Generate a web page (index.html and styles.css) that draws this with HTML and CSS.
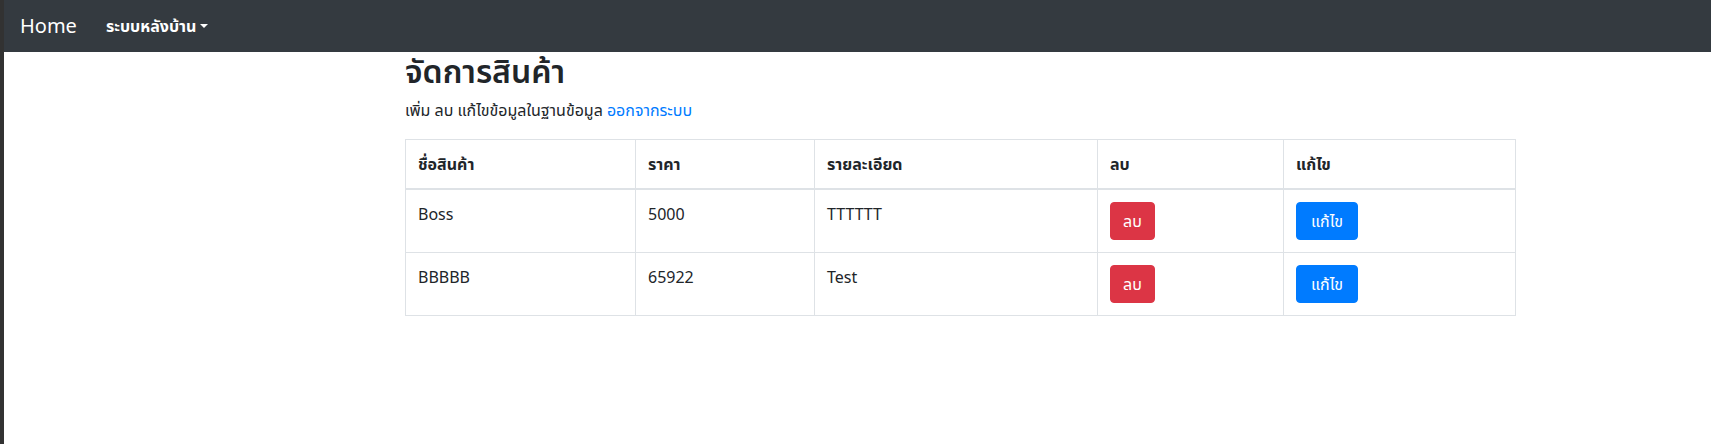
FILE: index.html
```html
<!DOCTYPE html>
<html lang="th">
<head>
<meta charset="utf-8">
<title>จัดการสินค้า</title>
<link rel="stylesheet" href="styles.css">
</head>
<body>
<nav class="navbar">
  <a class="brand" href="#">Home</a>
  <a class="nav-dropdown" href="#">ระบบหลังบ้าน<span class="caret"></span></a>
</nav>
<main class="container">
  <h2 class="title">จัดการสินค้า</h2>
  <p class="lead-text">เพิ่ม ลบ แก้ไขข้อมูลในฐานข้อมูล <a class="link" href="#">ออกจากระบบ</a></p>
  <table class="table">
    <colgroup>
      <col class="c1"><col class="c2"><col class="c3"><col class="c4"><col class="c5">
    </colgroup>
    <thead>
      <tr><th>ชื่อสินค้า</th><th>ราคา</th><th>รายละเอียด</th><th>ลบ</th><th>แก้ไข</th></tr>
    </thead>
    <tbody>
      <tr>
        <td>Boss</td><td>5000</td><td>TTTTTT</td>
        <td><a class="btn btn-danger" href="#">ลบ</a></td>
        <td><a class="btn btn-primary" href="#">แก้ไข</a></td>
      </tr>
      <tr>
        <td>BBBBB</td><td>65922</td><td>Test</td>
        <td><a class="btn btn-danger" href="#">ลบ</a></td>
        <td><a class="btn btn-primary" href="#">แก้ไข</a></td>
      </tr>
    </tbody>
  </table>
</main>
</body>
</html>
```
FILE: styles.css
```css
html, body {
  margin: 0;
  padding: 0;
}
body {
  min-height: 444px;
  box-sizing: border-box;
  border-left: 4px solid #323232;
  background: #fff;
  color: #212529;
  font-family: "Segoe UI", "Noto Sans", "Noto Sans Thai", "Leelawadee UI", sans-serif;
  font-size: 16px;
  line-height: 1.5;
}
.navbar {
  height: 52px;
  box-sizing: border-box;
  background: #343a40;
  display: flex;
  align-items: center;
  padding: 0 16px;
}
.brand {
  color: #fff;
  font-size: 20px;
  line-height: 30px;
  text-decoration: none;
  margin-right: 29px;
}
.nav-dropdown {
  color: #fff;
  font-weight: 700;
  text-decoration: none;
  display: flex;
  align-items: center;
}
.caret {
  display: inline-block;
  margin-left: 4px;
  width: 0;
  height: 0;
  border-top: 4px solid #fff;
  border-left: 4px solid transparent;
  border-right: 4px solid transparent;
}
.container {
  width: 1110px;
  margin-left: 401px;
}
.title {
  margin: 0 0 8px;
  font-size: 32px;
  font-weight: 600;
  line-height: 1.2;
}
.lead-text {
  margin: 0 0 17px;
}
.link {
  color: #007bff;
  text-decoration: none;
}
.table {
  width: 1110px;
  border-collapse: collapse;
  table-layout: fixed;
}
.c1 { width: 230px; }
.c2 { width: 179px; }
.c3 { width: 283px; }
.c4 { width: 186px; }
.c5 { width: 232px; }
.table th, .table td {
  border: 1px solid #dee2e6;
  padding: 12px;
  text-align: left;
  vertical-align: top;
}
.table th {
  font-weight: 700;
  border-bottom: 2px solid #dee2e6;
}
.btn {
  display: inline-block;
  padding: 6px 12px;
  border: 1px solid transparent;
  border-radius: 4px;
  color: #fff;
  text-decoration: none;
  line-height: 24px;
}
.btn-danger {
  background: #dc3545;
  border-color: #dc3545;
}
.btn-primary {
  background: #007bff;
  border-color: #007bff;
  padding: 6px 14px;
}
```
